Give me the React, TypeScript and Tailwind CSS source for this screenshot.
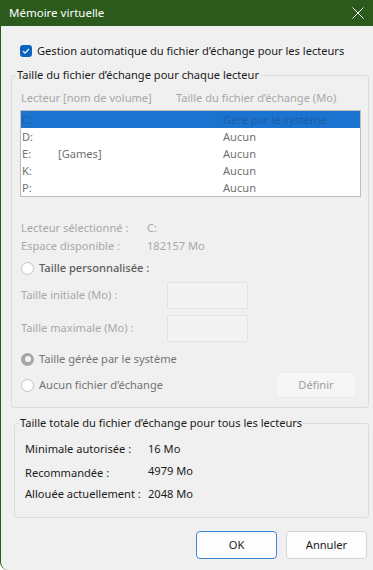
import React from 'react'

const rows = [
  { d: 'C:', name: '', size: 'Géré par le système', sel: true },
  { d: 'D:', name: '', size: 'Aucun' },
  { d: 'E:', name: '[Games]', size: 'Aucun' },
  { d: 'K:', name: '', size: 'Aucun' },
  { d: 'P:', name: '', size: 'Aucun' },
]

function Radio({ checked }: { checked?: boolean }) {
  if (checked) {
    return (
      <span className="w-[13px] h-[13px] rounded-full bg-[#a6a6a6] flex items-center justify-center">
        <span className="w-[6px] h-[6px] rounded-full bg-[#f5f5f5]" />
      </span>
    )
  }
  return <span className="w-[13px] h-[13px] rounded-full bg-white border border-[#c4c4c4]" />
}

export default function App() {
  return (
    <div className="w-[373px] h-[570px] bg-[#f0f0f0] border-l border-[#2c5a1c] rounded-bl-[8px] overflow-hidden whitespace-nowrap text-[11.1px] text-[#1b1b1b] font-['Noto_Sans',sans-serif]">
      {/* title bar */}
      <div className="h-[26px] bg-[#2c5a1c] flex items-center justify-between pl-[8px] pr-[8px] text-white text-[11.5px]">
        <span className="leading-[16px]">Mémoire virtuelle</span>
        <svg width="12" height="12" viewBox="0 0 12 12" className="mr-[1px]">
          <path d="M0.5 0.5 L11.5 11.5 M11.5 0.5 L0.5 11.5" stroke="white" strokeWidth="1" />
        </svg>
      </div>

      {/* auto checkbox */}
      <div className="mt-[18px] ml-[19px] h-[14px] flex items-center gap-[5px]">
        <span className="w-[12px] h-[12px] rounded-[3px] bg-[#0a64c0] flex items-center justify-center">
          <svg width="8" height="8" viewBox="0 0 8 8">
            <path d="M1 4.2 L3 6.2 L7 1.8" stroke="white" strokeWidth="1.2" fill="none" />
          </svg>
        </span>
        <span className="leading-[16px]">Gestion automatique du fichier d’échange pour les lecteurs</span>
      </div>

      {/* group 1 */}
      <fieldset className="mt-[9px] ml-[10px] w-[358px] border border-[#dcdcdc] rounded-[3px] pb-[9px]">
        <legend className="ml-[4px] px-[1px] leading-[16px]">Taille du fichier d’échange pour chaque lecteur</legend>
        <div className="mt-[7px] pl-[9px] h-[16px] flex leading-[16px] text-[#a8a8a8]">
          <span className="w-[155px]">Lecteur [nom de volume]</span>
          <span>Taille du fichier d’échange (Mo)</span>
        </div>
        <div className="mt-[4px] ml-[8px] w-[341px] border border-[#bdbdbd] bg-white">
          {rows.map((r) => (
            <div
              key={r.d}
              className={
                'h-[17px] flex items-center leading-[16px] ' +
                (r.sel ? 'bg-[#1a73cf] text-[#1c5fa8]' : 'text-[#707070]')
              }
            >
              <span className="w-[37px] pl-[1px]">{r.d}</span>
              <span className="w-[165px]">{r.name}</span>
              <span>{r.size}</span>
            </div>
          ))}
        </div>

        <div className="mt-[23px] pl-[9px] flex flex-col gap-[2px] text-[#a8a8a8] leading-[16px]">
          <div className="flex">
            <span className="w-[126px]">Lecteur sélectionné :</span>
            <span>C:</span>
          </div>
          <div className="flex">
            <span className="w-[126px]">Espace disponible :</span>
            <span>182157 Mo</span>
          </div>
        </div>

        <div className="mt-[6px] pl-[9px] h-[16px] flex items-center gap-[5px]">
          <Radio />
          <span className="leading-[16px] font-medium text-[#5c5c5c]">Taille personnalisée :</span>
        </div>

        <div className="mt-[6px] pl-[9px] flex flex-col gap-[6px] text-[#a8a8a8]">
          <div className="h-[27px] flex items-center">
            <span className="w-[146px]">Taille initiale (Mo) :</span>
            <span className="w-[81px] h-[27px] border border-[#e3e3e3] bg-[#f3f3f3] rounded-[2px]" />
          </div>
          <div className="h-[27px] flex items-center">
            <span className="w-[146px]">Taille maximale (Mo) :</span>
            <span className="w-[81px] h-[27px] border border-[#e3e3e3] bg-[#f3f3f3] rounded-[2px]" />
          </div>
        </div>

        <div className="mt-[9px] pl-[9px] h-[16px] flex items-center gap-[5px] text-[#747474]">
          <Radio checked />
          <span className="leading-[16px]">Taille gérée par le système</span>
        </div>

        <div className="mt-[5px] pl-[9px] pr-[12px] h-[26px] flex items-center justify-between text-[#747474]">
          <div className="flex items-center gap-[5px]">
            <Radio />
            <span className="leading-[16px]">Aucun fichier d’échange</span>
          </div>
          <button className="w-[80px] h-[26px] rounded-[4px] bg-[#f6f6f6] border border-[#ececec] text-[#a0a0a0]">
            Définir
          </button>
        </div>
      </fieldset>

      {/* group 2 */}
      <fieldset className="mt-[7px] ml-[13px] w-[355px] border border-[#dcdcdc] rounded-[3px] pb-[15px]">
        <legend className="ml-[4px] px-[1px] leading-[16px]">Taille totale du fichier d’échange pour tous les lecteurs</legend>
        <div className="mt-[10px] pl-[10px] flex flex-col leading-[16px]">
          <div className="flex h-[16px]">
            <span className="w-[123px]">Minimale autorisée :</span>
            <span>16 Mo</span>
          </div>
          <div className="flex h-[16px] mt-[7px]">
            <span className="w-[123px] pt-[1px]">Recommandée :</span>
            <span className="-mt-[1px]">4979 Mo</span>
          </div>
          <div className="flex h-[16px] mt-[6px]">
            <span className="w-[123px]">Allouée actuellement :</span>
            <span>2048 Mo</span>
          </div>
        </div>
      </fieldset>

      {/* buttons */}
      <div className="mt-[13px] pr-[6px] flex justify-end gap-[9px]">
        <button className="w-[81px] h-[28px] rounded-[4px] bg-[#fdfdfd] border border-[#3f86d0]">OK</button>
        <button className="w-[81px] h-[28px] rounded-[4px] bg-[#fdfdfd] border border-[#d5d5d5]">Annuler</button>
      </div>
    </div>
  )
}
